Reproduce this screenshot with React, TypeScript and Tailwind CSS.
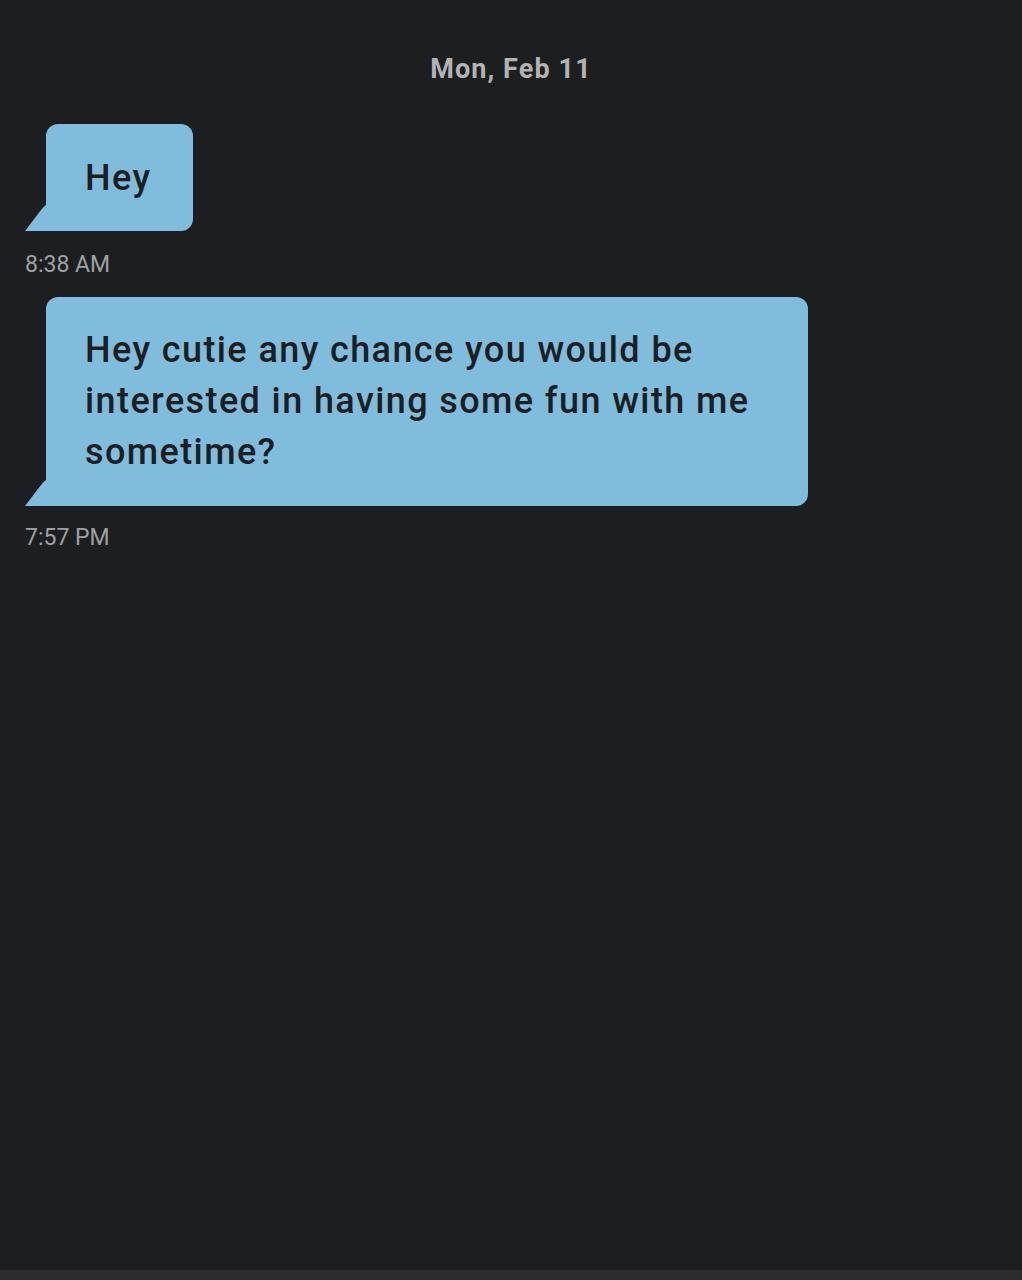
import React from "react";

function Tail() {
  return (
    <svg width="21" height="26" viewBox="0 0 21 26" className="block shrink-0">
      <path d="M21 0 L21 26 L0 26 L16 5 Q18 2 21 0 Z" fill="#80bcdb" />
    </svg>
  );
}

function Bubble({ children, className }: { children: React.ReactNode; className?: string }) {
  return (
    <div className="flex items-end">
      <Tail />
      <div
        className={
          "bg-[#80bcdb] rounded-tl-[12px] rounded-tr-[12px] rounded-br-[12px] text-[#1b1f24] text-[36px] leading-[51px] font-medium tracking-[1.4px] " +
          (className ?? "")
        }
      >
        {children}
      </div>
    </div>
  );
}

export default function App() {
  return (
    <div
      className="h-[1280px] w-full bg-[#1d1e20] flex flex-col"
      style={{ fontFamily: "Roboto, 'Noto Sans', sans-serif" }}
    >
      <div className="flex-1 flex flex-col px-[25px]">
        <div className="pt-[52px] h-[124px] text-center text-[#b3b3b3] text-[27px] leading-[34px] font-bold tracking-[1.1px]">
          Mon, Feb 11
        </div>
        <Bubble className="pl-[39px] pr-[42px] pt-[29px] pb-[27px]">Hey</Bubble>
        <div className="mt-[20px] text-[#a0a0a2] text-[23px] leading-[28px] font-normal">8:38 AM</div>
        <div className="mt-[18px]">
          <Bubble className="w-[762px] pl-[39px] pr-[20px] pt-[28px] pb-[28px]">
            Hey cutie any chance you would be
            <br />
            interested in having some fun with me
            <br />
            sometime?
          </Bubble>
        </div>
        <div className="mt-[18px] text-[#a0a0a2] text-[23px] leading-[28px] font-normal">7:57 PM</div>
      </div>
      <div className="h-[10px] bg-[#2c2c2e]" />
    </div>
  );
}
